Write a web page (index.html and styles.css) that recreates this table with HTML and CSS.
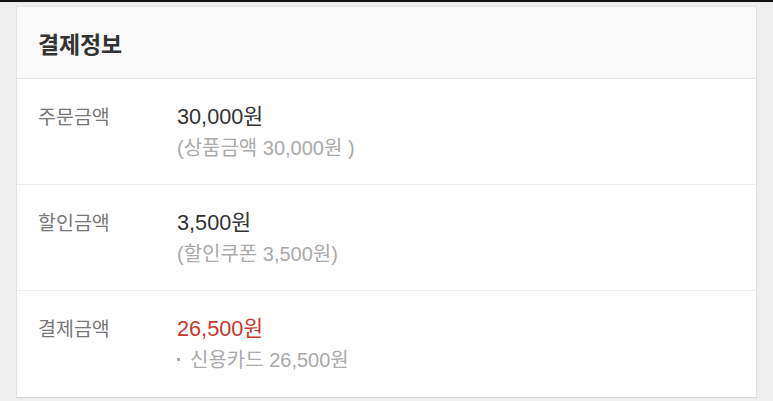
FILE: index.html
```html
<!doctype html>
<html>
<head>
    <meta charset="utf-8">
    <title>결제정보</title>
    <link rel="stylesheet" href="styles.css">
</head>

<body>
<div class="top-bar"></div>
<div class="pay-box">
    <div class="pay-header">
        <h2>결제정보</h2>
    </div>
    <div class="pay-row">
        <div class="pay-label">주문금액</div>
        <div class="pay-value">
            <p class="amount">30,000원</p>
            <p class="detail">(상품금액 30,000원 )</p>
        </div>
    </div>
    <div class="pay-row">
        <div class="pay-label">할인금액</div>
        <div class="pay-value">
            <p class="amount">3,500원</p>
            <p class="detail">(할인쿠폰 3,500원)</p>
        </div>
    </div>
    <div class="pay-row pay-row-last">
        <div class="pay-label">결제금액</div>
        <div class="pay-value">
            <p class="amount amount-total">26,500원</p>
            <p class="detail"><span class="dot"></span>신용카드 26,500원</p>
        </div>
    </div>
</div>
</body>

</html>
```

FILE: styles.css
```css
body {font-family: 'Liberation Sans', 'Noto Sans CJK KR', sans-serif; margin: 0; padding: 0; background: #eeeeee; color: #333;}
.top-bar {height: 2px; background: #111;}
.pay-box {margin: 4px 16px 0; background: #fff; border: 1px solid #e2e2e2; border-bottom-color: #d8d8d8;}
.pay-header {height: 71px; background: #f9f9f9; border-bottom: 1px solid #e3e3e3; display: flex; align-items: center; padding: 0 21px;}
.pay-header h2 {margin: 0; font-size: 23px; font-weight: bold; color: #333; letter-spacing: -0.2px;}
.pay-row {display: flex; padding: 23px 21px 20px; border-bottom: 1px solid #ececec;}
.pay-row-last {border-bottom: none; padding-bottom: 21px;}
.pay-label {width: 139px; font-size: 19.5px; line-height: 30px; color: #777;}
.pay-value p {margin: 0;}
.amount {font-size: 21.7px; line-height: 30px; color: #333;}
.amount-total {color: #c8372b;}
.detail {font-size: 20px; line-height: 32px; color: #aaa;}
.dot {display: inline-block; width: 3px; height: 3px; background: #aaa; vertical-align: middle; margin: 0 10px 4px 0;}
```
